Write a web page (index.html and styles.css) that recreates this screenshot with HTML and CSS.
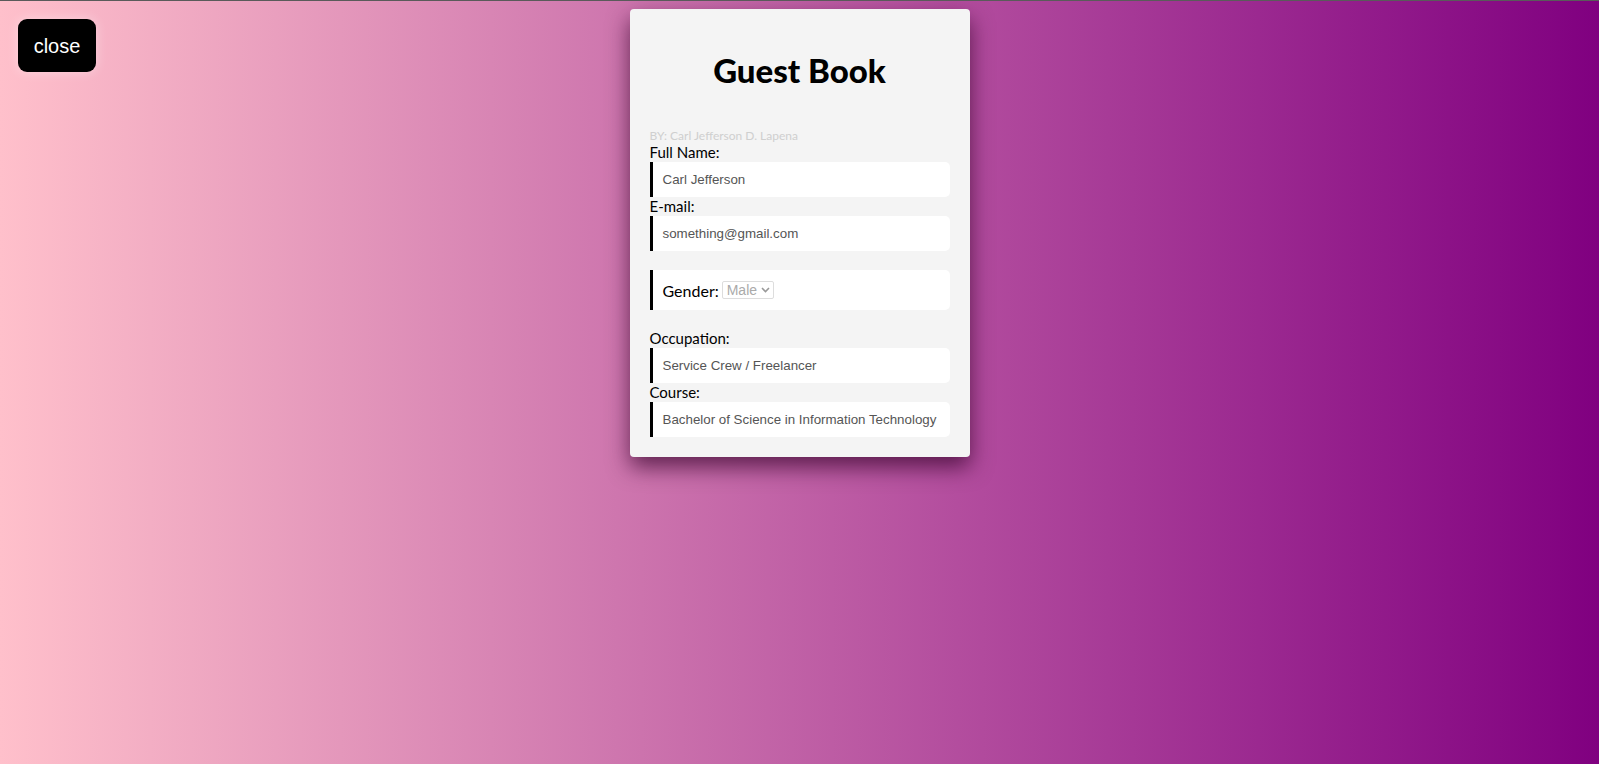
FILE: index.html
```html
<!DOCTYPE html>
<html>
<head>
<meta charset="utf-8">
<link rel="stylesheet" href="styles.css">
<title>Guest Book</title>
</head>
<body>
<button class="close">close</button>
<div class="card">
  <h1 class="title">Guest Book</h1>
  <div class="by">BY: Carl Jefferson D. Lapena</div>
  <label class="label">Full Name:</label>
  <div class="field">Carl Jefferson</div>
  <label class="label">E-mail:</label>
  <div class="field">something@gmail.com</div>
  <div class="spacer"></div>
  <div class="field gender">
    <span class="glabel">Gender:</span>
    <span class="select">Male <svg width="9" height="6" viewBox="0 0 9 6"><path d="M1 1 L4.5 4.5 L8 1" fill="none" stroke="#999" stroke-width="1.6"/></svg></span>
  </div>
  <div class="spacer"></div>
  <label class="label">Occupation:</label>
  <div class="field">Service Crew / Freelancer</div>
  <label class="label">Course:</label>
  <div class="field">Bachelor of Science in Information Technology</div>
</div>
</body>
</html>
```
FILE: styles.css
```css
html, body {
  margin: 0;
  padding: 0;
  height: 100%;
}
body {
  background: linear-gradient(to right, #ffc0cb 0%, #800080 100%);
  border-top: 1px solid #5a5a5a;
  box-sizing: border-box;
  font-family: "Lato", "Open Sans", sans-serif;
  overflow: hidden;
}
.close {
  position: absolute;
  left: 18px;
  top: 19px;
  width: 78px;
  height: 53px;
  background: #000;
  color: #fff;
  border: none;
  border-radius: 9px;
  font-family: "Liberation Sans", Arial, sans-serif;
  font-size: 20px;
  padding: 2px 0 0;
  box-shadow: 0 0 12px rgba(255,255,255,0.4);
}
.card {
  width: 300px;
  margin: 8px auto 0;
  padding: 42px 20px 20px;
  background: #f4f4f4;
  border-radius: 4px;
  box-shadow: 0 10px 22px rgba(50,0,40,0.7);
  display: flex;
  flex-direction: column;
}
.title {
  margin: 0;
  font-size: 33px;
  line-height: 38px;
  font-weight: 900;
  text-align: center;
  color: #000;
}
.by {
  margin-top: 39px;
  font-size: 12px;
  line-height: 15px;
  color: #cfcfcf;
}
.label {
  font-size: 15px;
  line-height: 19px;
  color: #000;
}
.field {
  height: 35px;
  box-sizing: border-box;
  background: #fff;
  border-left: 3px solid #000;
  border-radius: 0 5px 5px 0;
  padding-left: 10px;
  display: flex;
  align-items: center;
  font-family: "Liberation Sans", Arial, sans-serif;
  font-size: 13.33px;
  color: #555;
}
.spacer {
  height: 19px;
}
.gender {
  height: 40px;
  gap: 3px;
}
.glabel {
  font-family: "Lato", "Open Sans", sans-serif;
  font-size: 16px;
  color: #000;
}
.select {
  display: inline-flex;
  align-items: center;
  gap: 4px;
  height: 18px;
  box-sizing: border-box;
  border: 1px solid #ddd;
  border-radius: 2px;
  padding: 0 3px 0 4px;
  font-size: 14px;
  color: #aaa;
  background: #fff;
}
```
